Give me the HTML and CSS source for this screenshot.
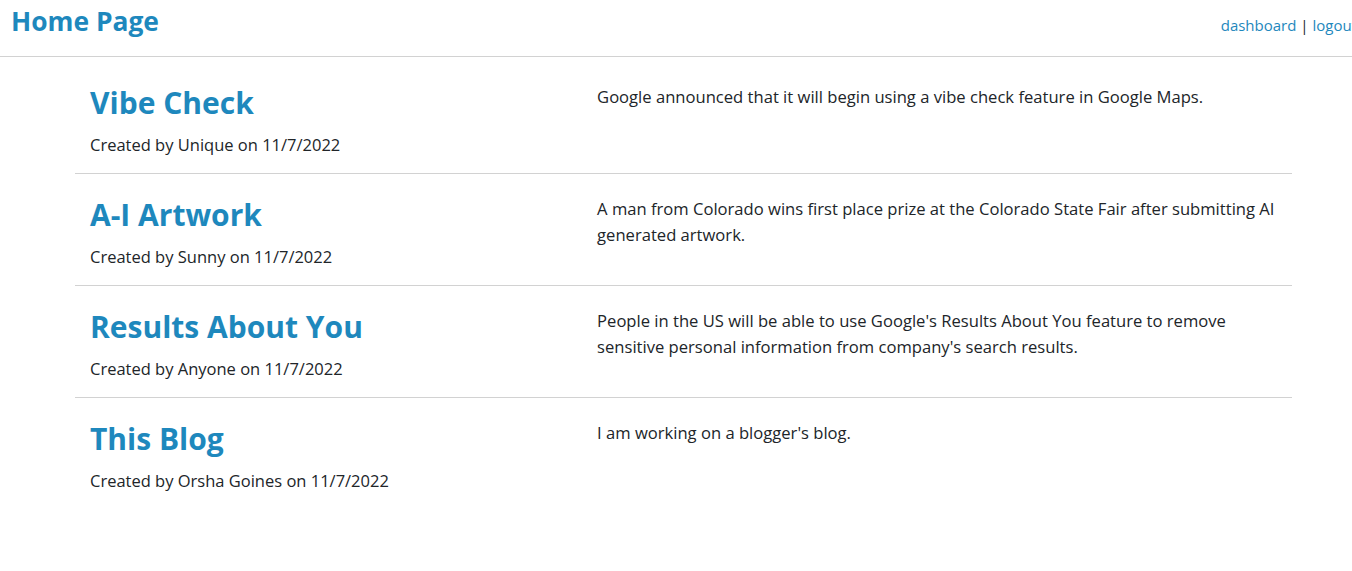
FILE: index.html
```html
<!DOCTYPE html>
<html lang="en">
<head>
<meta charset="utf-8">
<title>Home Page</title>
<link rel="stylesheet" href="styles.css">
</head>
<body>
<header class="topbar">
  <h1 class="brand">Home Page</h1>
  <nav class="nav"><a href="#">dashboard</a> <span class="sep">|</span> <a href="#">logout</a></nav>
</header>
<main class="posts">
  <article class="post">
    <div class="post-meta">
      <h2 class="post-title">Vibe Check</h2>
      <p class="post-by">Created by Unique on 11/7/2022</p>
    </div>
    <p class="post-body">Google announced that it will begin using a vibe check feature in Google Maps.</p>
  </article>
  <article class="post">
    <div class="post-meta">
      <h2 class="post-title">A-I Artwork</h2>
      <p class="post-by">Created by Sunny on 11/7/2022</p>
    </div>
    <p class="post-body">A man from Colorado wins first place prize at the Colorado State Fair after submitting AI generated artwork.</p>
  </article>
  <article class="post">
    <div class="post-meta">
      <h2 class="post-title">Results About You</h2>
      <p class="post-by">Created by Anyone on 11/7/2022</p>
    </div>
    <p class="post-body">People in the US will be able to use Google's Results About You feature to remove sensitive personal information from company's search results.</p>
  </article>
  <article class="post">
    <div class="post-meta">
      <h2 class="post-title">This Blog</h2>
      <p class="post-by">Created by Orsha Goines on 11/7/2022</p>
    </div>
    <p class="post-body">I am working on a blogger's blog.</p>
  </article>
</main>
</body>
</html>
```
FILE: styles.css
```css
* { box-sizing: border-box; }
html, body { margin: 0; padding: 0; overflow: hidden; }
body {
  font-family: "Open Sans", "Noto Sans", sans-serif;
  color: #212529;
  background: #fff;
  font-size: 16px;
}
.topbar {
  display: flex;
  justify-content: space-between;
  align-items: flex-start;
  height: 57px;
  border-bottom: 1px solid #d2d2d2;
  padding: 0 0 0 11px;
}
.brand {
  margin: 3px 0 0;
  font-size: 26.4px;
  font-weight: 700;
  color: #1e88bd;
  line-height: 36px;
}
.nav {
  margin: 13px -5px 0 0;
  font-size: 15px;
  line-height: 24px;
  white-space: nowrap;
}
.nav a { color: #1e88bd; text-decoration: none; }
.nav .sep { color: #212529; }
.posts {
  margin: 0 60px 0 75px;
  padding-top: 5px;
}
.post {
  display: grid;
  grid-template-columns: 5fr 7fr;
  height: 112px;
  border-bottom: 1px solid #d2d2d2;
}
.post:last-child { border-bottom: none; }
.post-meta { padding: 0 15px; }
.post-title {
  margin: 22px 0 0;
  font-size: 30px;
  font-weight: 700;
  line-height: 38px;
  color: #1e88bd;
}
.post-by {
  margin: 11px 0 0;
  font-size: 16.5px;
  line-height: 24px;
}
.post-body {
  margin: 22px 0 0;
  padding: 0 12px 0 15px;
  font-size: 16.6px;
  line-height: 26px;
}
```
